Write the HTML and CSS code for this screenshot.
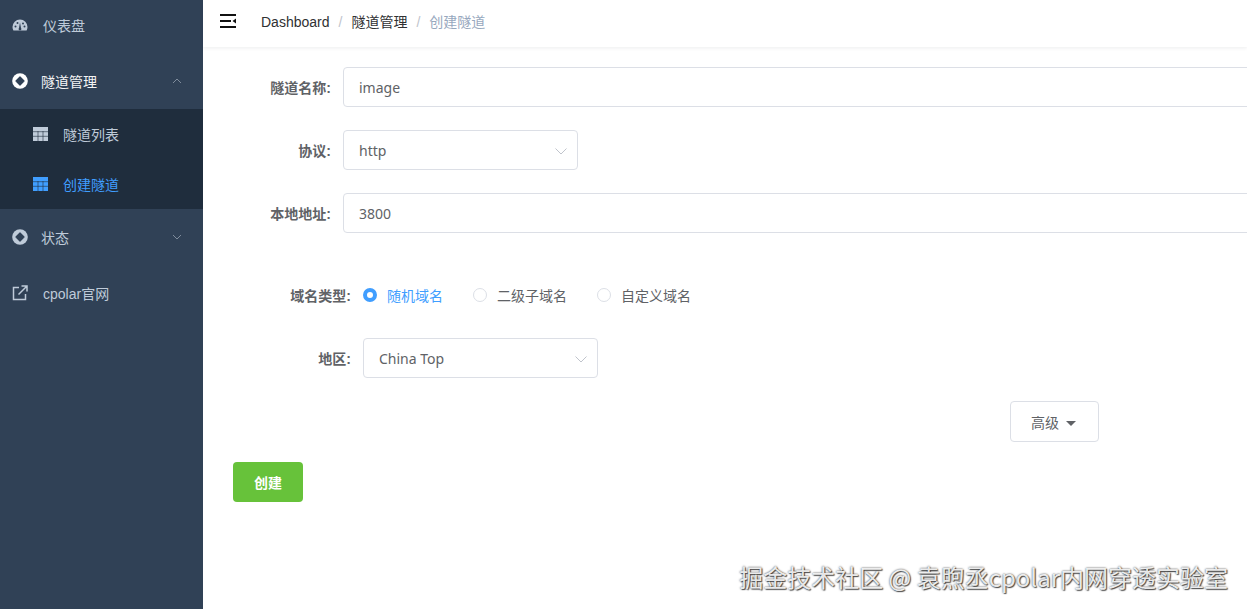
FILE: index.html
```html
<!DOCTYPE html>
<html lang="zh">
<head>
<meta charset="utf-8">
<title>创建隧道</title>
<link rel="stylesheet" href="styles.css">
</head>
<body>
<div class="app">
  <aside class="sidebar">
    <a class="menu-item first"><svg class="ico" viewBox="0 0 16 16"><path fill="#bfcbd9" d="M8 2.500A7.500 7.500 0 0 0 .5 10c0 1.300.3 2.400.9 3.500h13.200c.6-1.100.9-2.200.9-3.500A7.500 7.500 0 0 0 8 2.500z"/><circle cx="3.500" cy="9.500" r="1" fill="#304156"/><circle cx="5.500" cy="6" r="1" fill="#304156"/><circle cx="11" cy="6.500" r="1" fill="#304156"/><circle cx="12.500" cy="9.500" r="1" fill="#304156"/><path d="M8 5.500l1 5.500a1.400 1.400 0 1 1-2 0z" fill="#304156"/></svg><span>仪表盘</span></a>
    <a class="menu-item open"><svg class="ico" viewBox="0 0 16 16"><circle cx="8" cy="8" r="7.800" fill="#fff"/><path d="M8 4L12 8 8 12 4 8z" fill="#304156" stroke="#304156" stroke-width="1.200" stroke-linejoin="round"/></svg><span>隧道管理</span><svg class="chev" viewBox="0 0 12 12"><path d="M2 8l4-4 4 4" fill="none" stroke="#7f8c9c" stroke-width="1"/></svg></a>
    <div class="submenu">
      <a class="sub-item"><svg class="grid" viewBox="0 0 15 14"><path fill="#bfcbd9" d="M0 0h15v14H0z"/><path stroke="#1f2d3d" stroke-width=".6" d="M0 4.700h15M0 9.300h15M5 4v10M10 4v10"/></svg><span>隧道列表</span></a>
      <a class="sub-item active"><svg class="grid" viewBox="0 0 15 14"><path fill="#409eff" d="M0 0h15v14H0z"/><path stroke="#1f2d3d" stroke-width=".6" d="M0 4.700h15M0 9.300h15M5 4v10M10 4v10"/></svg><span>创建隧道</span></a>
    </div>
    <a class="menu-item status"><svg class="ico" viewBox="0 0 16 16"><circle cx="8" cy="8" r="7.800" fill="#bfcbd9"/><path d="M8 4L12 8 8 12 4 8z" fill="#304156" stroke="#304156" stroke-width="1.200" stroke-linejoin="round"/></svg><span>状态</span><svg class="chev" viewBox="0 0 12 12"><path d="M2 4l4 4 4-4" fill="none" stroke="#7f8c9c" stroke-width="1"/></svg></a>
    <a class="menu-item"><svg class="ico" viewBox="0 0 16 16"><path d="M7 2.500H1.500v12h12V9M6.500 9.500L14.500 1.500M9.500 1h5.500v5.500" fill="none" stroke="#bfcbd9" stroke-width="1.500"/></svg><span>cpolar官网</span></a>
  </aside>
  <main class="main">
    <header class="navbar">
      <svg class="hamburger" viewBox="0 0 18 16"><path d="M0 2h16M0 8h11M0 14h16" stroke="#111" stroke-width="2"/><path d="M16 5.500v5L12.500 8z" fill="#111"/></svg>
      <nav class="crumbs"><span>Dashboard</span><i>/</i><span>隧道管理</span><i>/</i><span class="current">创建隧道</span></nav>
    </header>
    <form class="form">
      <div class="row"><label>隧道名称:</label><div class="input wide">image</div></div>
      <div class="row"><label>协议:</label><div class="input select">http<svg class="caret" viewBox="0 0 14 14"><path d="M1.500 4.500L7 10l5.500-5.500" fill="none" stroke="#c0c4cc"/></svg></div></div>
      <div class="row"><label>本地地址:</label><div class="input wide">3800</div></div>
      <div class="row domain"><label>域名类型:</label>
        <div class="radios">
          <span class="radio on"><b></b>随机域名</span>
          <span class="radio"><b></b>二级子域名</span>
          <span class="radio"><b></b>自定义域名</span>
        </div>
      </div>
      <div class="row region"><label>地区:</label><div class="input select">China Top<svg class="caret" viewBox="0 0 14 14"><path d="M1.500 4.500L7 10l5.500-5.500" fill="none" stroke="#c0c4cc"/></svg></div></div>
      <div class="adv-row"><button type="button" class="adv">高级<em></em></button></div>
      <button type="button" class="create">创建</button>
    </form>
    <div class="watermark">掘金技术社区 @ 袁煦丞cpolar内网穿透实验室</div>
  </main>
</div>
</body>
</html>
```
FILE: styles.css
```css
* { box-sizing: border-box; }
html, body { margin: 0; height: 100%; overflow: hidden; }
body { font-family: "Liberation Sans", "Noto Sans CJK SC", sans-serif; font-size: 14px; color: #606266; background: #fff; }
.app { display: flex; height: 609px; }
.sidebar { width: 203px; flex: none; background: #304156; display: flex; flex-direction: column; color: #bfcbd9; }
.menu-item { height: 56px; display: flex; align-items: center; padding-left: 12px; font-size: 14px; }
.menu-item.first { height: 53px; padding-bottom: 4px; }
.menu-item .ico { width: 16px; height: 16px; margin-right: 15px; flex: none; }
.menu-item.open { color: #f4f4f5; }
.menu-item.open .ico, .menu-item.status .ico { margin-right: 13px; }
.chev { width: 12px; height: 12px; margin-left: auto; margin-right: 20px; }
.submenu { background: #1f2d3d; }
.sub-item { height: 50px; display: flex; align-items: center; padding-left: 33px; }
.sub-item.active { color: #409eff; }
.grid { width: 15px; height: 14px; margin-right: 15px; }
.main { flex: 1; min-width: 0; position: relative; }
.navbar { height: 47px; display: flex; align-items: center; padding: 0 0 5px 17px; box-shadow: 0 1px 4px rgba(0,21,41,.08); }
.hamburger { width: 18px; height: 16px; margin-right: 23px; }
.crumbs { display: flex; align-items: baseline; color: #303133; }
.crumbs i { font-style: normal; color: #c0c4cc; margin: 0 9px; }
.crumbs .current { color: #97a8be; }
.form { padding: 20px 0 0 30px; }
.row { display: flex; align-items: center; margin-bottom: 23px; }
.row label { width: 110px; flex: none; padding-right: 12px; text-align: right; font-weight: 700; color: #606266; }
.input { height: 40px; border: 1px solid #dcdfe6; border-radius: 4px; display: flex; align-items: center; padding: 0 15px; background: #fff; white-space: nowrap; font-family: "Noto Sans", "Noto Sans CJK SC", sans-serif; }
.wide { flex: 1; margin-right: -8px; }
.select { width: 235px; position: relative; }
.caret { position: absolute; right: 9px; top: 13px; width: 14px; height: 14px; }
.domain { margin-top: 43px; height: 40px; margin-bottom: 22px; padding-bottom: 2px; }
.domain label, .region label { width: 130px; }
.radios { display: flex; gap: 30px; }
.radio { display: flex; align-items: center; }
.radio b { width: 14px; height: 14px; border: 1px solid #dcdfe6; border-radius: 50%; margin-right: 10px; background: #fff; }
.radio.on { color: #409eff; }
.radio.on b { border: 4px solid #409eff; }
.adv-row { display: flex; justify-content: flex-end; padding-right: 148px; margin-bottom: 20px; }
.adv { width: 89px; height: 41px; border: 1px solid #dcdfe6; border-radius: 4px; background: #fff; color: #606266; font: 14px "Liberation Sans", "Noto Sans CJK SC", sans-serif; padding: 0 2px 0 0; }
.adv em { display: inline-block; margin-left: 7px; border: 5px solid transparent; border-top-color: #606266; border-bottom: 0; vertical-align: 2px; }
.create { width: 70px; height: 40px; background: #67c23a; color: #fff; border: 0; border-radius: 4px; font: 700 14px "Liberation Sans", "Noto Sans CJK SC", sans-serif; padding: 0 0 1px; display: block; }
.watermark { position: absolute; right: 19px; bottom: 15px; font-family: "Noto Sans CJK SC", sans-serif; font-size: 24px; color: rgba(255,255,255,.9); text-shadow: 0 0 2px #333, 1px 1px 1px #555; white-space: nowrap; }
```
